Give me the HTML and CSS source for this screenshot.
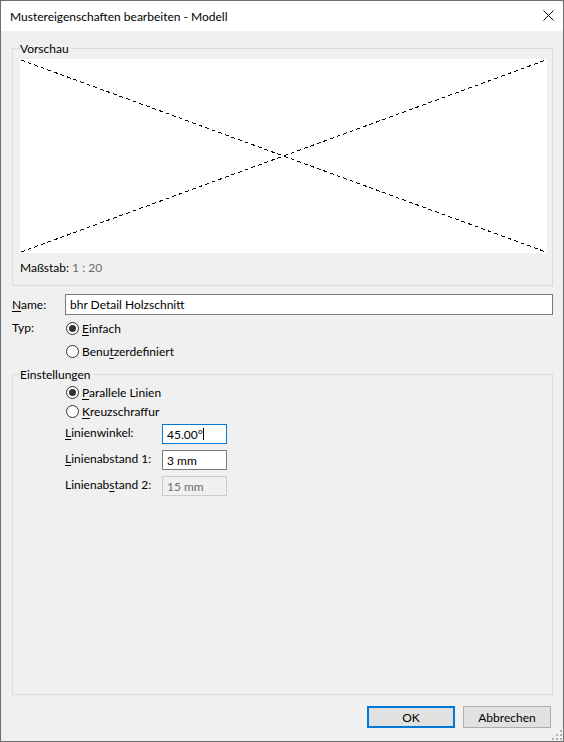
FILE: index.html
```html
<!DOCTYPE html>
<html lang="de">
<head>
<meta charset="utf-8">
<title>Mustereigenschaften bearbeiten - Modell</title>
<link rel="stylesheet" href="styles.css">
</head>
<body>
<div class="window">
  <div class="titlebar">
    <span class="title">Mustereigenschaften bearbeiten - Modell</span>
    <svg class="close" width="11" height="11" viewBox="0 0 11 11">
      <path d="M0.5 0.5 L10.5 10.5 M10.5 0.5 L0.5 10.5" stroke="#000" stroke-width="1" fill="none"/>
    </svg>
  </div>

  <div class="client">
    <fieldset class="group preview-group">
      <legend>Vorschau</legend>
      <div class="preview">
        <svg width="527" height="194" viewBox="0 0 527 194" shape-rendering="crispEdges">
          <line x1="1" y1="1" x2="526" y2="193" stroke="#000" stroke-width="1" stroke-dasharray="4 3"/>
          <line x1="1" y1="193" x2="526" y2="1" stroke="#000" stroke-width="1" stroke-dasharray="4 3"/>
        </svg>
      </div>
      <div class="scale">Maßstab: <span class="muted">1 : 20</span></div>
    </fieldset>

    <div class="name-row">
      <span class="field-label"><u>N</u>ame:</span>
      <div class="textbox wide">bhr Detail Holzschnitt</div>
    </div>

    <div class="type-row">
      <span class="field-label">Typ:</span>
      <div class="radio-list">
        <div class="radio checked"><span class="dot"></span><span><u>E</u>infach</span></div>
        <div class="radio"><span class="dot"></span><span>Benu<u>t</u>zerdefiniert</span></div>
      </div>
    </div>

    <fieldset class="group settings">
      <legend>Einstellungen</legend>
      <div class="settings-radios">
        <div class="radio checked compact"><span class="dot"></span><span><u>P</u>arallele Linien</span></div>
        <div class="radio compact"><span class="dot"></span><span><u>K</u>reuzschraffur</span></div>
      </div>
      <div class="params">
        <span class="param-label"><u>L</u>inienwinkel:</span>
        <div class="textbox small focused">45.00°<span class="caret"></span></div>
        <span class="param-label"><u>L</u>inienabstand 1:</span>
        <div class="textbox small">3 mm</div>
        <span class="param-label">Linienab<u>s</u>tand 2:</span>
        <div class="textbox small disabled">15 mm</div>
      </div>
    </fieldset>

    <div class="buttons">
      <button class="btn default">OK</button>
      <button class="btn">Abbrechen</button>
    </div>
  </div>

  <svg class="grip" width="10" height="10" viewBox="0 0 10 10">
    <rect x="8" y="0" width="2" height="2" fill="#b0b0b0"/>
    <rect x="4" y="4" width="2" height="2" fill="#b0b0b0"/>
    <rect x="8" y="4" width="2" height="2" fill="#b0b0b0"/>
    <rect x="0" y="8" width="2" height="2" fill="#b0b0b0"/>
    <rect x="4" y="8" width="2" height="2" fill="#b0b0b0"/>
    <rect x="8" y="8" width="2" height="2" fill="#b0b0b0"/>
  </svg>
</div>
</body>
</html>
```

FILE: styles.css
```css
* {
  box-sizing: border-box;
}

html, body {
  margin: 0;
  padding: 0;
  width: 564px;
  height: 742px;
  overflow: hidden;
}

body {
  font-family: Lato, "Noto Sans", "Liberation Sans", sans-serif;
  font-size: 12px;
  line-height: 15px;
  color: #000;
  background: #f0f0f0;
}

u {
  text-decoration: underline;
  text-underline-offset: 2px;
  text-decoration-thickness: 1px;
}

.window {
  position: relative;
  width: 564px;
  height: 742px;
  border: 1px solid #6e6e6e;
  display: flex;
  flex-direction: column;
  background: #f0f0f0;
}

/* title bar */
.titlebar {
  height: 30px;
  flex: none;
  background: #fff;
  display: flex;
  align-items: center;
  justify-content: space-between;
  padding: 0 9px 0 9px;
}

.title {
  font-size: 12px;
  position: relative;
  top: 0;
}

.close {
  display: block;
  margin-top: -1px;
}

/* dialog client area */
.client {
  flex: 1;
  display: flex;
  flex-direction: column;
  padding: 0 10px 13px 11px;
}

.group {
  margin: 0;
  border: 1px solid #dcdcdc;
  padding: 0 5px 0 7px;
  min-width: 0;
}

.group legend {
  padding: 0 2px 0 0;
  line-height: 15px;
}

.preview-group {
  margin-top: 10px;
  padding-top: 3px;
  padding-bottom: 10px;
}

.preview {
  height: 194px;
  background: #fff;
}

.preview svg {
  display: block;
}

.scale {
  margin-top: 7px;
  color: #000;
}

.muted {
  color: #6d6d6d;
}

/* name + type */
.name-row {
  margin-top: 8px;
  display: flex;
  align-items: center;
  height: 21px;
}

.field-label {
  width: 53px;
  flex: none;
}

.textbox {
  height: 21px;
  background: #fff;
  border: 1px solid #7a7a7a;
  padding: 0 4px;
  display: flex;
  align-items: center;
  white-space: nowrap;
}

.textbox.wide {
  flex: 1;
}

.type-row {
  margin-top: 2px;
  display: flex;
}

.type-row .field-label {
  line-height: 23px;
  margin-top: -1px;
}

.radio-list {
  margin-left: 1px;
  display: flex;
  flex-direction: column;
}

.radio {
  height: 23px;
  display: flex;
  align-items: center;
  gap: 3px;
}

.radio.compact {
  height: 19px;
}

.dot {
  width: 13px;
  height: 13px;
  border: 1px solid #333;
  border-radius: 50%;
  background: #fff;
  flex: none;
  display: flex;
  align-items: center;
  justify-content: center;
}

.radio.checked .dot::after {
  content: "";
  width: 7px;
  height: 7px;
  border-radius: 50%;
  background: #333;
}

/* settings group */
.settings {
  flex: 1;
  margin-top: 4px;
  padding-top: 1px;
}

.settings-radios {
  margin-left: 46px;
}

.params {
  margin-top: 3px;
  margin-left: 45px;
  display: grid;
  grid-template-columns: 97px 65px;
  row-gap: 6px;
  align-items: center;
}

.param-label {
  margin-top: -3px;
}

.textbox.small {
  height: 20px;
}

.textbox.focused {
  border-color: #0078d7;
}

.caret {
  display: inline-block;
  width: 1px;
  height: 12px;
  background: #000;
  margin-left: 0;
}

.textbox.disabled {
  background: #f0f0f0;
  border-color: #cccccc;
  color: #6d6d6d;
}

/* buttons */
.buttons {
  margin-top: 11px;
  display: flex;
  justify-content: flex-end;
  gap: 8px;
  padding-right: 2px;
}

.btn {
  width: 88px;
  height: 22px;
  font-family: inherit;
  font-size: 12px;
  color: #000;
  background: #e1e1e1;
  border: 1px solid #adadad;
  border-radius: 0;
  padding: 0;
  margin: 0;
}

.btn.default {
  border: 2px solid #0078d7;
}

.grip {
  position: absolute;
  right: 1px;
  bottom: 1px;
}
```
